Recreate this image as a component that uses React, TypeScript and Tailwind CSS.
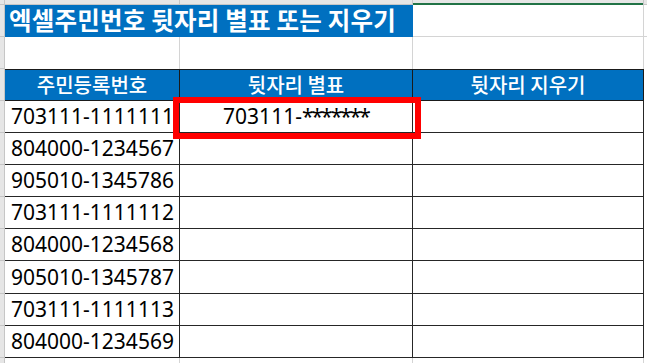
import React from 'react';

const ids = [
  '703111-1111111',
  '804000-1234567',
  '905010-1345786',
  '703111-1111112',
  '804000-1234568',
  '905010-1345787',
  '703111-1111113',
  '804000-1234569',
];

const kr = { fontFamily: '"Noto Sans CJK KR", "Noto Sans", sans-serif' };
const num = { fontFamily: '"Noto Sans", "Noto Sans CJK KR", sans-serif' };

const RowHead: React.FC = () => (
  <div className="w-[5px] shrink-0 bg-[#e6e6e6] border-r border-b border-[#c6c6c6]" />
);

export default function App() {
  return (
    <div className="relative w-[647px] h-[363px] overflow-hidden bg-white" style={kr}>
      {/* column header strip */}
      <div className="flex h-[5px]">
        <div className="w-[5px] shrink-0 bg-[#e6e6e6] border-r border-b border-[#c6c6c6]" />
        <div className="w-[175px] shrink-0 bg-[#e6e6e6] border-r border-b border-[#c6c6c6]" />
        <div className="w-[233px] shrink-0 bg-[#e6e6e6] border-r border-b border-[#c6c6c6]" />
        <div className="w-[231px] shrink-0 bg-[#e6e6e6] border-r border-[#c6c6c6] flex flex-col">
          <div className="flex-1" />
          <div className="h-[2px] bg-[#217346]" />
        </div>
        <div className="flex-1 bg-[#e6e6e6] border-b border-[#c6c6c6]" />
      </div>

      {/* title row */}
      <div className="flex h-[32px]">
        <RowHead />
        <div className="w-[408px] shrink-0 bg-[#0070c0] flex items-center pl-[4px] pb-[1px]">
          <span className="text-white font-bold text-[24.5px] tracking-[0.2px] leading-none whitespace-nowrap">
            엑셀주민번호 뒷자리 별표 또는 지우기
          </span>
        </div>
        <div className="w-[231px] shrink-0 border-r border-b border-[#d4d4d4]" />
        <div className="flex-1 border-b border-[#d4d4d4]" />
      </div>

      {/* blank row */}
      <div className="flex h-[32px]">
        <RowHead />
        <div className="w-[175px] shrink-0 border-r border-[#d4d4d4]" />
        <div className="w-[233px] shrink-0 border-r border-[#d4d4d4]" />
        <div className="w-[231px] shrink-0 border-r border-[#d4d4d4]" />
        <div className="flex-1" />
      </div>

      {/* header row */}
      <div className="flex h-[32px]">
        <RowHead />
        <div className="flex border-t border-b border-[#1a1a1a]">
          <div className="w-[175px] shrink-0 bg-[#0070c0] border-r border-[#1a1a1a] flex items-center justify-center text-white font-medium text-[20px] leading-none">
            주민등록번호
          </div>
          <div className="w-[233px] shrink-0 bg-[#0070c0] border-r border-[#1a1a1a] flex items-center justify-center text-white font-medium text-[20px] leading-none">
            뒷자리 별표
          </div>
          <div className="w-[231px] shrink-0 bg-[#0070c0] border-r border-[#1a1a1a] flex items-center justify-center text-white font-medium text-[20px] leading-none">
            뒷자리 지우기
          </div>
        </div>
        <div className="flex-1" />
      </div>

      {/* data rows */}
      {ids.map((id, i) => (
        <div key={id} className="flex h-[32.1px]">
          <RowHead />
          <div className="flex border-b border-[#262626]">
            <div
              className="w-[175px] shrink-0 border-r border-[#262626] flex items-center pl-[6px] text-black text-[21px] leading-none whitespace-nowrap overflow-hidden"
              style={num}
            >
              {id}
            </div>
            <div
              className="w-[233px] shrink-0 border-r border-[#262626] flex items-center justify-center text-black text-[21px] leading-none whitespace-nowrap"
              style={num}
            >
              {i === 0 && (
                <>
                  703111-<span className="tracking-[-2px]">*******</span>
                </>
              )}
            </div>
            <div className="w-[231px] shrink-0 border-r border-[#262626]" />
          </div>
          <div className="flex-1" />
        </div>
      ))}

      {/* trailing grid row */}
      <div className="flex h-[10px]">
        <div className="w-[5px] shrink-0 bg-[#e6e6e6] border-r border-[#c6c6c6]" />
        <div className="w-[175px] shrink-0 border-r border-[#d4d4d4]" />
        <div className="w-[233px] shrink-0 border-r border-[#d4d4d4]" />
        <div className="w-[231px] shrink-0 border-r border-[#d4d4d4]" />
      </div>

      {/* red highlight box */}
      <div className="absolute left-[173px] top-[97px] w-[248px] h-[42px] border-[6px] border-[#ff0000]" />
    </div>
  );
}
